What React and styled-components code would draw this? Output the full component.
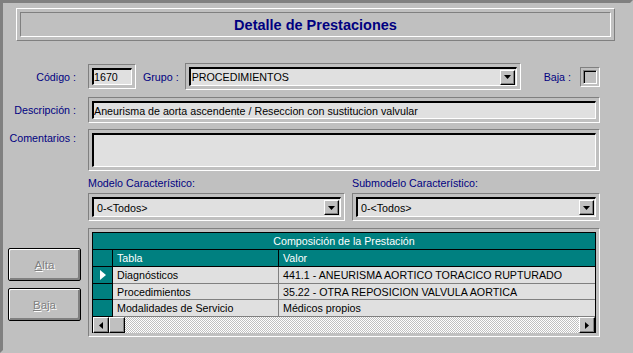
import styled, { createGlobalStyle } from "styled-components";

const GlobalStyle = createGlobalStyle`
  html, body {
    margin: 0;
    padding: 0;
    background: #c0c0c0;
  }
  body {
    font-family: "Liberation Sans", Arial, sans-serif;
    font-size: 10.7px;
    color: #000;
  }
`;

const rows = [
  { tabla: "Diagnósticos", valor: "441.1 - ANEURISMA AORTICO TORACICO RUPTURADO", current: true },
  { tabla: "Procedimientos", valor: "35.22 - OTRA REPOSICION VALVULA AORTICA" },
  { tabla: "Modalidades de Servicio", valor: "Médicos propios" },
];

const DownArrow = () => (
  <svg width="7" height="4" viewBox="0 0 7 4">
    <path d="M0 0h7L3.5 4z" fill="#000" />
  </svg>
);

const Combo = ({ value, height, indent }) => (
  <Well>
    <ComboField $h={height} $indent={indent}>
      <span>{value}</span>
      <DropButton>
        <DownArrow />
      </DropButton>
    </ComboField>
  </Well>
);

const App = () => {
  return (
    <>
      <GlobalStyle />
      <Window>
        <TitleOuter>
          <TitleInner>Detalle de Prestaciones</TitleInner>
        </TitleOuter>

        <Form>
          <Label>Código :</Label>
          <Line>
            <Well $w={48}>
              <Field $h={17}>1670</Field>
            </Well>
            <InlineLabel $ml={7} $mr={6}>Grupo :</InlineLabel>
            <Grow>
              <Combo value="PROCEDIMIENTOS" height={19} indent={1} />
            </Grow>
            <InlineLabel $ml={23} $mr={9}>Baja :</InlineLabel>
            <Well $w={20} $pad={2}>
              <CheckBox />
            </Well>
          </Line>

          <Label $mt={7}>Descripción :</Label>
          <Line $mt={7}>
            <Grow>
              <Well>
                <Field $h={18}>
                  Aneurisma de aorta ascendente / Reseccion con sustitucion valvular
                </Field>
              </Well>
            </Grow>
          </Line>

          <Label $mt={6} $top>
            Comentarios :
          </Label>
          <Line $mt={6}>
            <Grow>
              <Well>
                <Field $h={34} />
              </Well>
            </Grow>
          </Line>

          <div />
          <Models>
            <ModelCol>
              <SmallLabel>Modelo Característico:</SmallLabel>
              <Combo value="0-<Todos>" height={20} indent={3} />
            </ModelCol>
            <ModelCol>
              <SmallLabel>Submodelo Característico:</SmallLabel>
              <Combo value="0-<Todos>" height={20} indent={3} />
            </ModelCol>
          </Models>

          <Buttons>
            <Button disabled>
              <u>A</u>lta
            </Button>
            <Button disabled>
              <u>B</u>aja
            </Button>
          </Buttons>
          <GridWell>
            <Table>
              <Caption>Composición de la Prestación</Caption>
              <HeadRow>
                <Indicator />
                <HeadCell $w={166}>Tabla</HeadCell>
                <HeadCell>Valor</HeadCell>
              </HeadRow>
              {rows.map((r) => (
                <DataRow key={r.tabla}>
                  <Indicator>
                    {r.current && (
                      <svg width="6" height="10" viewBox="0 0 6 10">
                        <path d="M0 0l6 5-6 5z" fill="#fff" />
                      </svg>
                    )}
                  </Indicator>
                  <Cell $w={166}>{r.tabla}</Cell>
                  <Cell>{r.valor}</Cell>
                </DataRow>
              ))}
              <ScrollBar>
                <ScrollButton>
                  <svg width="4" height="7" viewBox="0 0 4 7">
                    <path d="M4 0v7L0 3.5z" fill="#000" />
                  </svg>
                </ScrollButton>
                <ScrollButton />
                <Track />
                <ScrollButton>
                  <svg width="4" height="7" viewBox="0 0 4 7">
                    <path d="M0 0v7l4-3.5z" fill="#000" />
                  </svg>
                </ScrollButton>
              </ScrollBar>
            </Table>
          </GridWell>
        </Form>
      </Window>
    </>
  );
};

export default App;

const Window = styled.div`
  width: 633px;
  height: 353px;
  box-sizing: border-box;
  border: 3px solid;
  border-color: #808080 #c0c0c0 #c0c0c0 #808080;
  background: #c0c0c0;
  padding: 5px 0 0 5px;
  display: flex;
  flex-direction: column;
`;

const TitleOuter = styled.div`
  margin: 0 15px 0 8px;
  border: 1px solid;
  border-color: #fff #808080 #808080 #fff;
  padding: 3px;
`;

const TitleInner = styled.div`
  height: 23px;
  border: 1px solid;
  border-color: #808080 #fff #fff #808080;
  display: flex;
  align-items: center;
  justify-content: center;
  color: #000080;
  font-size: 14.5px;
  font-weight: bold;
`;

const Form = styled.div`
  margin-top: 22px;
  display: grid;
  grid-template-columns: 73px 512px;
  column-gap: 7px;
`;

const Label = styled.div`
  margin-top: ${(p) => p.$mt || 0}px;
  padding-right: 5px;
  color: #000080;
  display: flex;
  justify-content: flex-end;
  align-items: ${(p) => (p.$top ? "flex-start" : "center")};
  padding-top: ${(p) => (p.$top ? 3 : 0)}px;
  white-space: nowrap;
`;

const Line = styled.div`
  margin-top: ${(p) => p.$mt || 0}px;
  display: flex;
  align-items: center;
`;

const Grow = styled.div`
  flex: 1;
  min-width: 0;
`;

const InlineLabel = styled.span`
  margin: 0 ${(p) => p.$mr}px 0 ${(p) => p.$ml}px;
  color: #000080;
  white-space: nowrap;
`;

const Well = styled.div`
  box-sizing: border-box;
  width: ${(p) => (p.$w ? `${p.$w}px` : "auto")};
  border: 1px solid;
  border-color: #808080 #fff #fff #808080;
  padding: ${(p) => p.$pad ?? 3}px;
`;

const Field = styled.div`
  box-sizing: border-box;
  height: ${(p) => p.$h}px;
  background: #e0e0e0;
  border-style: solid;
  border-width: 2px 1px 1px 2px;
  border-color: #000 #fff #fff #000;
  padding: 0;
  display: flex;
  align-items: center;
  white-space: nowrap;
  overflow: hidden;
`;

const ComboField = styled(Field)`
  justify-content: space-between;
  padding: 0 1px 0 ${(p) => p.$indent}px;
`;

const DropButton = styled.div`
  box-sizing: border-box;
  width: 15px;
  height: 15px;
  background: #c0c0c0;
  border: 1px solid;
  border-color: #fff #000 #000 #fff;
  box-shadow: inset -1px -1px 0 #808080;
  display: flex;
  align-items: center;
  justify-content: center;
`;

const CheckBox = styled.div`
  box-sizing: border-box;
  width: 14px;
  height: 14px;
  border: 1px solid;
  border-color: #808080 #fff #fff #808080;
  box-shadow: inset 1px 1px 0 #000;
  background: #c0c0c0;
`;

const Models = styled.div`
  margin-top: 6px;
  display: grid;
  grid-template-columns: 257px 248px;
  column-gap: 7px;
`;

const ModelCol = styled.div`
  display: flex;
  flex-direction: column;
  gap: 3px;
`;

const SmallLabel = styled.div`
  color: #000080;
  height: 13px;
  line-height: 13px;
`;

const Buttons = styled.div`
  margin-top: 27px;
  display: flex;
  flex-direction: column;
  gap: 7px;
`;

const Button = styled.button`
  box-sizing: border-box;
  width: 73px;
  height: 33px;
  background: #c0c0c0;
  border: 1px solid #000;
  border-radius: 2px;
  box-shadow: inset 1px 1px 0 #fff, inset -1px -1px 0 #808080, inset -2px -2px 0 #808080;
  font-family: "Liberation Sans", Arial, sans-serif;
  font-size: 11.5px;
  color: #808080;
  text-shadow: 1px 1px 0 #fff;
  padding: 0;
`;

const GridWell = styled(Well)`
  margin-top: 7px;
  height: 109px;
`;

const Table = styled.div`
  height: 101px;
  box-sizing: border-box;
  border: 1px solid #000;
  border-bottom: none;
  background: #e0e0e0;
  display: flex;
  flex-direction: column;
`;

const Caption = styled.div`
  height: 16px;
  background: #008080;
  color: #fff;
  border-bottom: 1px solid #000;
  display: flex;
  align-items: center;
  justify-content: center;
`;

const HeadRow = styled.div`
  height: 17px;
  display: flex;
  background: #008080;
  border-bottom: 1px solid #000;
`;

const Indicator = styled.div`
  width: 19px;
  flex: none;
  background: #008080;
  border-right: 1px solid #000;
  display: flex;
  align-items: center;
  justify-content: center;
`;

const HeadCell = styled.div`
  box-sizing: border-box;
  width: ${(p) => (p.$w ? `${p.$w}px` : "auto")};
  flex: ${(p) => (p.$w ? "none" : 1)};
  color: #fff;
  padding: 0 4px;
  border-right: 1px solid #000;
  display: flex;
  align-items: center;
  &:last-child {
    border-right: none;
  }
`;

const DataRow = styled.div`
  height: 16px;
  display: flex;
  border-bottom: 1px solid #808080;
  & > ${Indicator} {
    border-bottom: 1px solid #000;
    margin-bottom: -1px;
  }
`;

const Cell = styled.div`
  box-sizing: border-box;
  width: ${(p) => (p.$w ? `${p.$w}px` : "auto")};
  flex: ${(p) => (p.$w ? "none" : 1)};
  padding: 0 4px;
  border-right: 1px solid #808080;
  display: flex;
  align-items: center;
  white-space: nowrap;
  &:last-child {
    border-right: none;
  }
`;

const ScrollBar = styled.div`
  height: 16px;
  display: flex;
  margin-top: auto;
`;

const ScrollButton = styled.div`
  box-sizing: border-box;
  width: 16px;
  height: 16px;
  flex: none;
  background: #c0c0c0;
  border: 1px solid;
  border-color: #fff #000 #000 #fff;
  box-shadow: inset -1px -1px 0 #808080;
  display: flex;
  align-items: center;
  justify-content: center;
`;

const Track = styled.div`
  flex: 1;
  background: repeating-conic-gradient(#fff 0 25%, #c0c0c0 0 50%) 0 0 / 2px 2px;
`;
